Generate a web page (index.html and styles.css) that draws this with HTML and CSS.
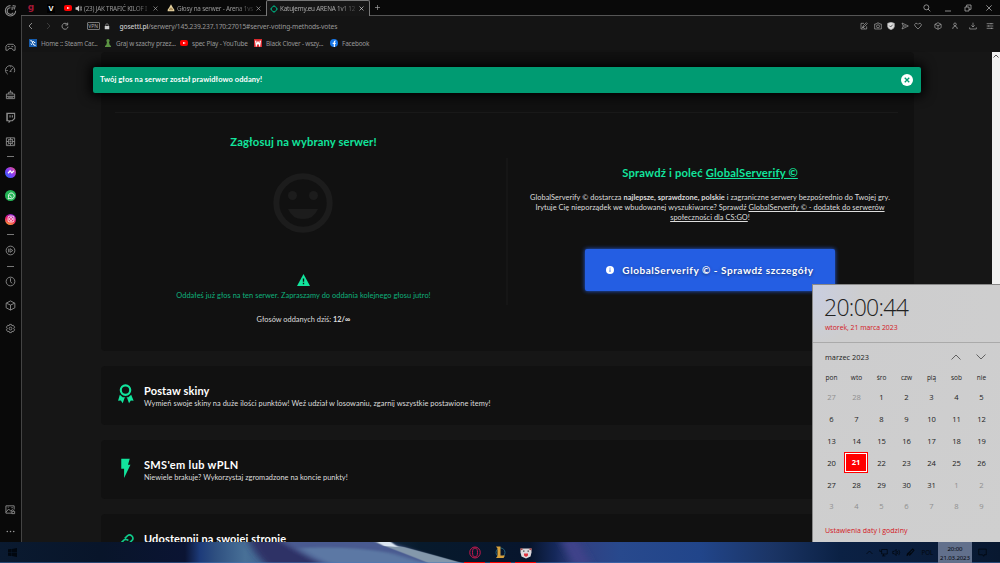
FILE: index.html
```
<!DOCTYPE html>
<html lang="pl">
<head>
    <meta charset="UTF-8">
    <meta name="viewport" content="width=device-width, initial-scale=1.0">
    <title>Katujemy.eu ARENA 1v1</title>
    <link rel="stylesheet" href="styles.css">
</head>
<body>
    <div class="screen">
        <div class="browser">
            <aside class="sidebar">
                <div class="side-logo">
                    <svg viewBox="0 0 24 24"><path d="M12 3a9.5 9.5 0 1 0 9.500 9.500M12 7a6 6 0 1 0 5 9M16 3l6 1M17 7h4M15 11V5M19 10V7"/></svg>
                </div>
                <div class="side-item"><svg viewBox="0 0 24 24"><path d="M6 5h12l4 4v9h-4l-3-4H9l-3 4H2V9zM6 10h4M14 10h4"/></svg></div>
                <div class="side-item"><svg viewBox="0 0 24 24"><path d="M6 20a10 10 0 1 1 14-4M12 13l5-6M10 14h4M3 12h3M12 3v2"/></svg></div>
                <div class="side-item"><svg viewBox="0 0 24 24"><path d="M3 11h18v10H3zM3 16h18M8 11V7h8v4M12 7V3M6 18h12"/></svg></div>
                <div class="side-item"><svg viewBox="0 0 24 24"><path d="M4 3h17v11l-5 5h-4l-3 3v-3H4zM11 7v5M16 7v5M5 3v15" stroke-width="2.400"/></svg></div>
                <div class="side-item"><svg viewBox="0 0 24 24"><path d="M3 4h18v17H3zM8 8h8v8H8zM11 11h2v2h-2zM3 12h5M16 12h5M12 4v4M12 16v5M6 6l2 2M18 6l-2 2M6 19l2-3M18 19l-2-3"/></svg></div>
                <div class="side-dash"></div>
                <div class="side-item"><span class="app-icon messenger"><svg viewBox="0 0 24 24"><path d="M5 15l5-6 4 5 5-5" stroke-width="3"/></svg></span></div>
                <div class="side-item"><span class="app-icon whatsapp"><svg viewBox="0 0 24 24"><path d="M5 19l1.500-4a7 7 0 1 1 3 3zM9 9c0 3 3 6 6 6"/></svg></span></div>
                <div class="side-item"><span class="app-icon instagram"><svg viewBox="0 0 24 24"><rect x="5" y="5" width="14" height="14" rx="4"/><circle cx="12" cy="12" r="3.500"/></svg></span></div>
                <div class="side-dash"></div>
                <div class="side-item"><svg viewBox="0 0 24 24"><circle cx="12" cy="12" r="9.500"/><path d="M8 8v8M11 8l6 4-6 4z"/></svg></div>
                <div class="side-dash"></div>
                <div class="side-item"><svg viewBox="0 0 24 24"><circle cx="12" cy="12" r="9.500"/><path d="M12 5v7l3 4"/></svg></div>
                <div class="side-item"><svg viewBox="0 0 24 24"><path d="M12 2l9.500 5v10L12 22l-9.500-5V7zM3 7l9 4 9-4M12 11v11"/></svg></div>
                <div class="side-item"><svg viewBox="0 0 24 24"><path d="M10 3h4l1 3 3-1 3 4-2 3 2 3-3 4-3-1-1 3h-4l-1-3-3 1-3-4 2-3-2-3 3-4 3 1z"/><circle cx="12" cy="12" r="3"/></svg></div>
                <div class="side-bottom">
                    <div class="side-item"><svg viewBox="0 0 24 24"><path d="M20 12V4H2v16h14M2 18l6-7 5 5 3-4 3 3M6 7h2M15 16h6v5h-6zM14 8h3"/></svg></div>
                    <div class="side-item"><svg viewBox="0 0 24 24" class="solid"><circle cx="5" cy="12" r="1.700"/><circle cx="12" cy="12" r="1.700"/><circle cx="19" cy="12" r="1.700"/></svg></div>
                </div>
            </aside>

            <div class="window">
                <div class="tabs">
                    <div class="tab pinned"><span class="g-icon">g</span></div>
                    <div class="tab pinned"><span class="v-icon">V</span></div>
                    <div class="tab tab-yt">
                        <span class="yt"></span>
                        <svg class="speaker" viewBox="0 0 24 24"><path d="M2 8h5l7-6v20l-7-6H2z"/><path d="M17 6q5 6 0 12M20 3q7 9 0 18" class="line"/></svg>
                        <span class="tab-title">(23) JAK TRAFIĆ KILOF I</span>
                        <svg class="close" viewBox="0 0 10 10"><path d="M1 1l8 8M9 1l-8 8"/></svg>
                    </div>
                    <div class="tab tab-arena">
                        <svg class="tab-icon" viewBox="0 0 24 24"><path d="M12 1l5 9 5 7v5H2v-5l5-7z" fill="#e6d3a0"/><path d="M8 13h8M6 17h12" stroke="#7c5a2c" stroke-width="2"/></svg>
                        <span class="tab-title">Głosy na serwer - Arena 1vs</span>
                        <svg class="close" viewBox="0 0 10 10"><path d="M1 1l8 8M9 1l-8 8"/></svg>
                    </div>
                    <div class="tab active">
                        <svg class="tab-icon" viewBox="0 0 24 24"><circle cx="12" cy="12" r="8" fill="none" stroke="#009b72" stroke-width="3"/><path d="M12 0v6M12 18v6M0 12h6M18 12h6" stroke="#009b72" stroke-width="3"/></svg>
                        <span class="tab-title">Katujemy.eu ARENA 1v1 12</span>
                        <svg class="close" viewBox="0 0 10 10"><path d="M1 1l8 8M9 1l-8 8"/></svg>
                    </div>
                    <div class="new-tab"><svg class="close" viewBox="0 0 10 10"><path d="M5 0v10M0 5h10"/></svg></div>
                    <div class="window-buttons">
                        <svg viewBox="0 0 24 24"><circle cx="10" cy="10" r="7.500"/><path d="M15 15l7 7"/></svg>
                        <svg viewBox="0 0 24 24"><path d="M3 21h18"/></svg>
                        <svg viewBox="0 0 24 24"><path d="M3 9h12v12H3zM8 9V3h13v13h-6"/></svg>
                        <svg viewBox="0 0 24 24"><path d="M4 4l16 16M20 4L4 20"/></svg>
                    </div>
                </div>

                <div class="address-bar">
                    <svg class="nav-icon" viewBox="0 0 24 24"><path d="M15 3l-9 9 9 9"/></svg>
                    <svg class="nav-icon off" viewBox="0 0 24 24"><path d="M9 3l9 9-9 9"/></svg>
                    <svg class="nav-icon" viewBox="0 0 24 24"><path d="M19 7a9 9 0 1 0 2 7M20 2v7h-7"/></svg>
                    <span class="vpn">VPN</span>
                    <svg class="lock" viewBox="0 0 24 24"><path d="M3 10h18v13H3z"/><path class="line" d="M7 10V6a5 5 0 0 1 10 0v4"/></svg>
                    <span class="url"><b>gosetti.pl</b>/serwery/145.239.237.170:27015#server-voting-methods-votes</span>
                    <div class="tools">
                        <svg viewBox="0 0 24 24"><path d="M12 4H3v17h17v-8M8 16l2-5 9-9 3 3-9 9zM5 19l5-5M14 20l-5-5"/></svg>
                        <svg viewBox="0 0 24 24"><path d="M2 6h5l2-3h6l2 3h5v15H2z"/><circle cx="12" cy="13" r="4.500"/></svg>
                        <svg viewBox="0 0 24 24"><path d="M12 1l10 3v9q0 7-10 10Q2 20 2 13V4z" fill="#ddd"/><path d="M7 11l4 4 6-7" stroke="#222"/></svg>
                        <svg viewBox="0 0 24 24"><path d="M3 3l19 9-19 9 4-9zM7 12h8"/></svg>
                        <svg viewBox="0 0 24 24"><path d="M12 21L3 12Q0 6 5 4q5-1 7 3 2-4 7-3 5 2 2 8z"/></svg>
                        <svg viewBox="0 0 24 24" class="gap"><path d="M12 2l9.500 5v10L12 22l-9.500-5V7zM3 7l9 4 9-4M12 11v11"/></svg>
                        <svg viewBox="0 0 24 24" class="gap"><circle cx="12" cy="7" r="4"/><path d="M5 21q0-8 7-8t7 8"/></svg>
                        <svg viewBox="0 0 24 24" class="gap"><path d="M12 2v13M7 10l5 5 5-5M2 16v5h20v-5"/></svg>
                        <svg viewBox="0 0 24 24" class="gap"><path d="M2 5h20M2 12h20M2 19h20M15 3v4M8 10v4M16 17v4"/></svg>
                    </div>
                </div>

                <div class="bookmarks">
                    <div class="bookmark bm-home"><svg viewBox="0 0 24 24"><path d="M0 0h24v24H0z" fill="#165bab"/><path d="M4 5l5 1 2 6 3 6 6 1M12 6l3 4 4 1M5 14l4 3" stroke="#fff" stroke-width="3" fill="none"/></svg><span>Home :: Steam Car...</span></div>
                    <div class="bookmark bm-chess"><svg viewBox="0 0 24 24"><path d="M12 0a5 5 0 0 1 3 9l2 8 4 4v3H3v-3l4-4 2-8a5 5 0 0 1 3-9z" fill="#5b9343"/></svg><span>Graj w szachy przez...</span></div>
                    <div class="bookmark bm-yt"><span class="yt"></span><span>spec Play - YouTube</span></div>
                    <div class="bookmark bm-clover"><svg viewBox="0 0 24 24"><path d="M0 0h24v24H0z" fill="#d9282d"/><path d="M5 5l2 14 5-10 5 10 2-14" stroke="#fff" stroke-width="4" fill="none"/></svg><span>Black Clover - wszy...</span></div>
                    <div class="bookmark bm-fb"><svg viewBox="0 0 24 24"><circle cx="12" cy="12" r="12" fill="#1877e8"/><path d="M17 6h-2q-2 0-2 3v15M8 13h9" stroke="#fff" stroke-width="3.500" fill="none"/></svg><span>Facebook</span></div>
                </div>

                <div class="viewport">
                    <main class="page">
                        <section class="card vote-card">
                            <hr>
                            <div class="columns">
                                <div class="vote">
                                    <h2 class="vote-title">Zagłosuj na wybrany serwer!</h2>
                                    <svg class="smile" viewBox="0 0 60 60"><circle cx="30" cy="30" r="26.700" fill="none" stroke="#1c1c1c" stroke-width="6"/><circle cx="19.500" cy="22.500" r="4.500"/><circle cx="40.500" cy="22.500" r="4.500"/><path d="M15 36h30q-4 10-15 10T15 36z"/></svg>
                                    <svg class="warning" viewBox="0 0 24 22"><path d="M12 0l12 22H0z" fill="#12e59d"/><path d="M12 8v6M12 16v3" stroke="#111" stroke-width="2.500"/></svg>
                                    <p class="vote-info">Oddałeś już głos na ten serwer. Zapraszamy do oddania kolejnego głosu jutro!</p>
                                    <p class="vote-count">Głosów oddanych dziś: <b>12/∞</b></p>
                                </div>
                                <div class="divider"></div>
                                <div class="promo">
                                    <h2 class="promo-title">Sprawdź i poleć <u>GlobalServerify ©</u></h2>
                                    <p class="promo-text">
                                        GlobalServerify © dostarcza <b>najlepsze, sprawdzone, polskie</b> i zagraniczne serwery bezpośrednio do Twojej gry.<br>
                                        Irytuje Cię nieporządek we wbudowanej wyszukiwarce? Sprawdź <u>GlobalServerify © - dodatek do serwerów</u><br>
                                        <u>społeczności dla CS:GO</u>!
                                    </p>
                                    <div class="promo-btn">
                                        <svg viewBox="0 0 24 24"><circle cx="12" cy="12" r="12" fill="#fff"/><path d="M12 5v3M12 10v8" stroke="#245ee3" stroke-width="2.500"/></svg>
                                        <span>GlobalServerify © - Sprawdź szczegóły</span>
                                    </div>
                                </div>
                            </div>
                        </section>

                        <section class="card method">
                            <svg viewBox="0 0 24 28"><circle cx="12" cy="8.500" r="6.700" fill="none" stroke="#12e59d" stroke-width="3"/><path d="M4 15l4 3.500h8l4-3.500 3.500 8.500-4-.5-2.500 4-3-8-1.500-.5-1.500.5-3 8-2.500-4-4 .5z" fill="#12e59d"/></svg>
                            <div>
                                <h3>Postaw skiny</h3>
                                <p class="skins-info">Wymień swoje skiny na duże ilości punktów! Weź udział w losowaniu, zgarnij wszystkie postawione itemy!</p>
                            </div>
                        </section>
                        <section class="card method">
                            <svg viewBox="0 0 24 28"><path d="M6 1h12l-2.500 8.500H19L10 28V15H6z" fill="#12e59d"/></svg>
                            <div>
                                <h3 class="sms-title">SMS'em lub wPLN</h3>
                                <p>Niewiele brakuje? Wykorzystaj zgromadzone na koncie punkty!</p>
                            </div>
                        </section>
                        <section class="card method">
                            <svg viewBox="0 0 24 28"><path d="M11 9l4-4a4.800 4.800 0 0 1 7 6l-5 5a4.500 4.500 0 0 1-6 0M16 12a4.500 4.500 0 0 0-7 0l-5 5" fill="none" stroke="#0fca8b" stroke-width="2.400"/></svg>
                            <div>
                                <h3>Udostępnij na swojej stronie</h3>
                            </div>
                        </section>
                    </main>
                    <div class="scrollbar"><svg viewBox="0 0 8 8"><path d="M1.500 5.500L4 3l2.500 2.500"/></svg></div>
                </div>
            </div>
        </div>

        <footer class="taskbar">
            <svg class="wallpaper" viewBox="0 0 1000 21" preserveAspectRatio="none">
                <defs>
                    <linearGradient id="sky">
                        <stop offset="0" stop-color="#0a1a30"/>
                        <stop offset=".1" stop-color="#08152a"/>
                        <stop offset=".185" stop-color="#0b1433"/>
                        <stop offset=".2" stop-color="#1d3b7a"/>
                        <stop offset=".215" stop-color="#2e4f80"/>
                        <stop offset=".245" stop-color="#487097"/>
                        <stop offset=".27" stop-color="#3f6291"/>
                        <stop offset=".31" stop-color="#303463"/>
                        <stop offset=".36" stop-color="#17304c"/>
                        <stop offset=".42" stop-color="#071a2c"/>
                        <stop offset=".53" stop-color="#07152d"/>
                        <stop offset=".555" stop-color="#15285a"/>
                        <stop offset=".575" stop-color="#323f80"/>
                        <stop offset=".62" stop-color="#28498d"/>
                        <stop offset=".7" stop-color="#21458a"/>
                        <stop offset=".77" stop-color="#1b3566"/>
                        <stop offset=".84" stop-color="#0b2144"/>
                        <stop offset=".9" stop-color="#0a1e3e"/>
                        <stop offset="1" stop-color="#081830"/>
                    </linearGradient>
                    <filter id="soft"><feGaussianBlur stdDeviation="4 1"/></filter>
                    <filter id="edge"><feGaussianBlur stdDeviation="1 .6"/></filter>
                </defs>
                <path d="M0 0h1000v21H0z" fill="url(#sky)"/>
                <g filter="url(#soft)">
                    <path d="M248 -3h55q25 12 42 27h-77q-14-12-20-27z" fill="#2f3366"/>
                    <path d="M278 -3h98q45 13 82 27H325q-25-12-47-27z" fill="#4a5a90"/>
                    <path d="M300 6q50-2 90 5l45 13h-98q-25-8-37-18z" fill="#5c78a4"/>
                    <path d="M562 0h16l12 21h-16z" fill="#41428a"/>
                </g>
                <g filter="url(#edge)">
                    <path d="M374 0l30 5q30 8 62 17h-35q-30-12-57-22z" fill="#8498ab"/>
                    <path d="M377 0h14l7 5-14-1z" fill="#dbe6f2"/>
                </g>
                <path d="M0 20.500h1000" stroke="#4778ba" stroke-opacity=".5"/>
            </svg>
            <svg class="start" viewBox="0 0 20 20"><path d="M0 3l8-1v7H0zM9 2l11-2v9H9zM0 10h8v8l-8-1zM9 10h11v10L9 18z"/></svg>
            <div class="apps">
                <div class="app"><svg viewBox="0 0 24 24"><ellipse cx="12" cy="12" rx="10.500" ry="11" fill="none" stroke="#c7184e" stroke-width="2"/><ellipse cx="12" cy="12" rx="5" ry="9" fill="none" stroke="#c7184e" stroke-width="2"/></svg></div>
                <div class="app"><svg viewBox="0 0 24 24"><circle cx="13" cy="12" r="9" fill="none" stroke="#25627a" stroke-width="2"/><path d="M4 0h9v18h9l-3 5H4l3-4V4z" fill="#d6a03c"/></svg></div>
                <div class="app"><svg viewBox="0 0 24 24"><path d="M1 4l6 0h10l6 0 0 8-2 8-9 4-9-4L1 12z" fill="#ded9dd"/><path d="M1 3l6 2-6 3zM23 3l-6 2 6 3z" fill="#a34444"/><path d="M6 9h3M15 9h3" stroke="#555" stroke-width="2.500"/><path d="M8 14h8v4l-4 3-4-3z" fill="#df3440"/></svg></div>
            </div>
            <div class="tray">
                <svg viewBox="0 0 24 24"><path d="M4 16l8-8 8 8"/></svg>
                <svg viewBox="0 0 24 24"><path d="M7 4h15v12H7zM2 4v5h5M12 16v5M8 21h9"/></svg>
                <svg viewBox="0 0 24 24"><path d="M2 9h4l5-5v16l-5-5H2zM14 8q3 4 0 8M18 5q5 7 0 14"/></svg>
                <svg viewBox="0 0 24 24"><path d="M3 21q0-8 6-8t1 6q-4 0-2-7L18 3l3 3-9 11" stroke-width="3"/></svg>
                <span class="lang">POL</span>
                <div class="clock"><span>20:00</span><span>21.03.2023</span></div>
                <svg class="notice" viewBox="0 0 24 24"><path d="M2 3h20v15h-6v4l-5-4H2z"/></svg>
            </div>
        </footer>

        <div class="toast">
            <span>Twój głos na serwer został prawidłowo oddany!</span>
            <svg viewBox="0 0 24 24"><circle cx="12" cy="12" r="12" fill="#fff"/><path d="M7.500 7.500l9 9M16.500 7.500l-9 9" stroke="#009b72" stroke-width="2.600"/></svg>
        </div>

        <div class="calendar">
            <div class="cal-top">
                <div class="time">20:00:44</div>
                <div class="date">wtorek, 21 marca 2023</div>
            </div>
            <div class="cal-month">
                <span>marzec 2023</span>
                <svg viewBox="0 0 10 10"><path d="M.5 7.500L5 3l4.500 4.500"/></svg>
                <svg viewBox="0 0 10 10"><path d="M.5 2.500L5 7l4.500-4.500"/></svg>
            </div>
            <div class="cal-week">
                <span>pon</span><span>wto</span><span>śro</span><span>czw</span><span>pią</span><span>sob</span><span>nie</span>
            </div>
            <div class="cal-days">
                <span class="other">27</span><span class="other">28</span><span>1</span><span>2</span><span>3</span><span>4</span><span>5</span>
                <span>6</span><span>7</span><span>8</span><span>9</span><span>10</span><span>11</span><span>12</span>
                <span>13</span><span>14</span><span>15</span><span>16</span><span>17</span><span>18</span><span>19</span>
                <span>20</span><span class="today">21</span><span>22</span><span>23</span><span>24</span><span>25</span><span>26</span>
                <span>27</span><span>28</span><span>29</span><span>30</span><span>31</span><span class="other">1</span><span class="other">2</span>
                <span class="other">3</span><span class="other">4</span><span class="other">5</span><span class="other">6</span><span class="other">7</span><span class="other">8</span><span class="other">9</span>
            </div>
            <div class="cal-settings">Ustawienia daty i godziny</div>
        </div>
    </div>
</body>
</html>
```

FILE: styles.css
```
:root {
    --green: #12e59d;
    --page-bg: #161616;
    --card-bg: #111111;
    --ui-font: "Noto Sans", "Open Sans", sans-serif;
    --page-font: Lato, "Open Sans", sans-serif;
}

* {
    margin: 0;
    padding: 0;
    box-sizing: border-box;
}

body {
    width: 1000px;
    height: 563px;
    overflow: hidden;
    background: #000;
    font-family: var(--ui-font);
}

svg {
    display: block;
    flex: none;
}

.screen {
    position: relative;
    display: flex;
    flex-direction: column;
    height: 563px;
}

.browser {
    display: flex;
    height: 542px;
}

/* Sidebar */
.sidebar {
    display: flex;
    flex-direction: column;
    align-items: center;
    width: 21px;
    background: #090909;
    flex: none;
}

.sidebar svg {
    width: 11px;
    height: 11px;
    fill: none;
    stroke: #8b8b8b;
    stroke-width: 2;
}

.sidebar svg.solid {
    fill: #999;
    stroke: none;
}

.side-logo {
    height: 35.3px;
    padding-top: 4px;
}

.side-logo svg {
    width: 13px;
    height: 13px;
}

.side-item {
    display: flex;
    align-items: center;
    justify-content: center;
    height: 23.5px;
    flex: none;
}

.side-dash {
    display: flex;
    align-items: center;
    height: 7.8px;
    flex: none;
}

.side-dash::after {
    content: '';
    width: 7px;
    height: 1px;
    background: #777;
}

.app-icon {
    display: flex;
    align-items: center;
    justify-content: center;
    width: 11px;
    height: 11px;
    border-radius: 50%;
}

.sidebar .app-icon svg {
    width: 10px;
    height: 10px;
    stroke: #fff;
}

.messenger {
    background: linear-gradient(45deg, #1a6dff, #8a3cf5 50%, #f9557a);
}

.whatsapp {
    background: #22b455;
}

.instagram {
    background: linear-gradient(20deg, #ffb52e, #ee1c68 50%, #6f1cf0);
}

.side-bottom {
    margin-top: auto;
}

.side-bottom .side-item {
    height: 21.5px;
}

/* Browser window */
.window {
    display: flex;
    flex-direction: column;
    flex: 1;
    min-width: 0;
}

.tabs {
    display: flex;
    height: 16px;
    background: #090909;
    border-bottom: 1px solid #555;
    color: #999;
    font-size: 6.3px;
}

.tab {
    display: flex;
    align-items: center;
    height: 16px;
}

.pinned {
    justify-content: center;
    width: 20px;
}

.g-icon {
    color: #a31836;
    font: bold 9px/10px "DejaVu Sans", sans-serif;
    transform: translateY(-1px);
}

.v-icon {
    width: 8px;
    background: #000;
    color: #fff;
    font: bold 7.5px/9px "Liberation Sans", sans-serif;
    text-align: center;
}

.tab-yt {
    width: 102px;
    padding-left: 3px;
    letter-spacing: -.2px;
}

.tab-arena {
    width: 103px;
    padding-left: 4px;
    letter-spacing: -.2px;
}

.tab.active {
    width: 104px;
    padding-left: 3px;
    background: #161616;
    border: 1px solid #777;
    border-bottom: 0;
    border-radius: 2px 2px 0 0;
    color: #aaa;
    letter-spacing: -.18px;
}

.tab-title {
    flex: 1;
    white-space: nowrap;
    -webkit-mask-image: linear-gradient(90deg, #000 75%, rgba(0, 0, 0, .2));
    mask-image: linear-gradient(90deg, #000 75%, rgba(0, 0, 0, .2));
}

.tab-icon {
    width: 8px;
    height: 8px;
    margin-right: 2px;
}

.close {
    width: 5px;
    height: 5px;
    margin-left: 2px;
    margin-right: 5px;
    stroke: #aaa;
    stroke-width: 1.3;
}

.active .close {
    stroke: #ddd;
}

.yt {
    position: relative;
    display: block;
    width: 8px;
    height: 6px;
    background: #f00;
    border-radius: 2px;
    flex: none;
}

.yt::after {
    content: '';
    position: absolute;
    left: 3px;
    top: 1.5px;
    border-left: 3px solid #fff;
    border-top: 1.5px solid transparent;
    border-bottom: 1.5px solid transparent;
}

.speaker {
    width: 7px;
    height: 7px;
    margin: 0 2px 0 3px;
    fill: #ccc;
}

.line {
    fill: none;
    stroke: #ccc;
    stroke-width: 2;
}

.new-tab {
    padding: 5px 0 0 3px;
}

.window-buttons {
    display: flex;
    align-items: center;
    gap: 12.7px;
    margin-left: auto;
    padding-right: 7px;
}

.window-buttons svg {
    width: 8px;
    height: 8px;
    fill: none;
    stroke: #aaa;
    stroke-width: 2.4;
}

.address-bar {
    display: flex;
    align-items: center;
    height: 20px;
    padding-left: 5px;
    background: #141414;
    border-left: 1px solid #444;
}

.nav-icon {
    width: 8px;
    height: 8px;
    margin-right: 9.2px;
    fill: none;
    stroke: #aaa;
    stroke-width: 2.4;
}

.nav-icon.off {
    stroke: #444;
}

.vpn {
    width: 13px;
    height: 8px;
    margin-left: 8px;
    border: 1px solid #777;
    border-radius: 1px;
    color: #aaa;
    font-size: 5px;
    line-height: 6px;
    text-align: center;
}

.lock {
    width: 6px;
    height: 7px;
    margin: 0 10px 0 4px;
    fill: #ccc;
}

.url {
    color: #999;
    font-size: 6.7px;
    letter-spacing: -.14px;
    white-space: nowrap;
}

.url b {
    color: #ccc;
    font-weight: 500;
}

.tools {
    display: flex;
    gap: 5.5px;
    margin-left: auto;
    padding-right: 6px;
}

.tools svg {
    width: 8px;
    height: 8px;
    fill: none;
    stroke: #aaa;
    stroke-width: 2;
}

.tools .gap {
    margin-left: 4px;
}

.tools .gap:nth-child(6) {
    margin-left: 6px;
}

.bookmarks {
    display: flex;
    align-items: center;
    height: 16px;
    padding: 0 0 2px 7px;
    background: #141414;
    border-left: 1px solid #444;
    color: #999;
    font-size: 6.4px;
    letter-spacing: -.17px;
}

.bookmark {
    display: flex;
    align-items: center;
    gap: 4px;
    white-space: nowrap;
}

.bookmark svg {
    width: 8px;
    height: 8px;
}

.bm-home {
    width: 75px;
}

.bm-chess {
    width: 76px;
}

.bm-yt {
    width: 74px;
}

.bm-clover {
    width: 76px;
}

.viewport {
    display: flex;
    height: 490px;
    background: var(--page-bg);
    border-left: 1px solid #444;
}

/* Voting page */
.page {
    display: flex;
    flex-direction: column;
    gap: 15px;
    flex: 1;
    height: 490px;
    padding: 0 78px 0 79px;
    overflow: hidden;
    color: #ddd;
    font-family: var(--page-font);
}

.card {
    background: var(--card-bg);
    border-radius: 4px;
    flex: none;
}

.vote-card {
    height: 299px;
    padding: 60px 16px 0 14px;
}

.vote-card hr {
    border: 0;
    border-top: 1px solid #191919;
}

.columns {
    display: flex;
}

.vote {
    display: flex;
    flex-direction: column;
    align-items: center;
    width: 377px;
    padding-top: 21px;
}

.vote h2,
.promo h2 {
    color: var(--green);
    font-size: 11.2px;
    font-weight: 700;
    letter-spacing: .2px;
    line-height: 16px;
    white-space: nowrap;
}

.vote .vote-title {
    letter-spacing: .15px;
}

.smile {
    width: 60px;
    height: 60px;
    margin: 23px 1px 0 0;
    fill: #1c1c1c;
}

.warning {
    width: 13px;
    height: 12px;
    margin-top: 41px;
}

.vote-info {
    margin-top: 4px;
    color: #0fb27c;
    font-size: 7.4px;
    letter-spacing: .04px;
    line-height: 11px;
    white-space: nowrap;
}

.vote-count {
    margin-top: 14px;
    font-size: 7.4px;
    line-height: 10px;
}

.divider {
    width: 2px;
    height: 147px;
    margin: 45px 0 0 14px;
    background: #161616;
}

.promo {
    display: flex;
    flex-direction: column;
    align-items: center;
    flex: 1;
    padding: 52px 0 0 14px;
}

.promo-text {
    margin-top: 12px;
    font-size: 7.4px;
    letter-spacing: .035px;
    line-height: 10px;
    text-align: center;
    white-space: nowrap;
}

.promo-btn {
    display: flex;
    align-items: center;
    justify-content: center;
    gap: 8px;
    width: 250px;
    height: 42px;
    margin-top: 26px;
    border-radius: 2px;
    background: #245ee3;
    box-shadow: 0 0 4px #245ee3;
    color: #fff;
    font-size: 10px;
    font-weight: 700;
    letter-spacing: .54px;
    white-space: nowrap;
    text-shadow: 0 1px 3px rgba(0, 0, 0, .5);
}

.promo-btn svg {
    width: 8px;
    height: 8px;
}

.method {
    display: flex;
    align-items: flex-start;
    gap: 10px;
    height: 59px;
    padding: 18px 16px;
}

.method svg {
    width: 17px;
    height: 20px;
}

.method h3 {
    color: #fff;
    font-size: 11px;
    font-weight: 700;
    letter-spacing: .13px;
    line-height: 14px;
    white-space: nowrap;
}

.method .sms-title {
    letter-spacing: .33px;
}

.method p {
    margin-top: .5px;
    font-size: 7.4px;
    line-height: 10px;
    white-space: nowrap;
}

.method .skins-info {
    letter-spacing: .04px;
}

.scrollbar {
    width: 8px;
    background: #f1f1f1;
}

.scrollbar svg {
    width: 8px;
    height: 8px;
    fill: none;
    stroke: #555;
}

/* Taskbar */
.taskbar {
    position: relative;
    display: flex;
    align-items: center;
    height: 21px;
}

.wallpaper {
    position: absolute;
    inset: 0;
    width: 1000px;
    height: 21px;
    z-index: -1;
}

.start {
    width: 9px;
    height: 9px;
    margin: 0 auto 0 8px;
    fill: #01070f;
}

.apps {
    display: flex;
    gap: 4.5px;
    height: 21px;
    margin-right: 329px;
}

.app {
    display: flex;
    justify-content: center;
    width: 21px;
    padding-top: 4px;
    border-bottom: 1px solid #f00;
}

.app svg {
    width: 12px;
    height: 13px;
}

.tray {
    display: flex;
    align-items: center;
    gap: 4.6px;
    color: #02070e;
}

.tray svg {
    width: 9px;
    height: 9px;
    fill: none;
    stroke: #02070e;
    stroke-width: 2;
}

.lang {
    margin-left: 2px;
    font-size: 6.2px;
}

.clock {
    display: flex;
    flex-direction: column;
    align-items: center;
    justify-content: center;
    width: 34px;
    height: 21px;
    background: #62708c;
    font-size: 6.1px;
    letter-spacing: -.15px;
    line-height: 9px;
}

.tray .notice {
    margin: 0 13px 0 1.5px;
}

/* Confirmation toast */
.toast {
    position: absolute;
    left: 93px;
    top: 67px;
    display: flex;
    align-items: center;
    justify-content: space-between;
    width: 828px;
    height: 26px;
    padding: 0 8px 0 7px;
    border-radius: 2px;
    background: #009b72;
    box-shadow: 0 0 12px 3px #000;
    color: #fff;
    font: 700 7.5px/10px var(--page-font);
    letter-spacing: .09px;
}

.toast svg {
    width: 12px;
    height: 12px;
}

/* Calendar flyout */
.calendar {
    position: absolute;
    left: 812px;
    top: 284px;
    width: 188px;
    height: 258px;
    border-top: 1px solid #888;
    border-left: 1px solid #888;
    background: radial-gradient(circle at 0 10px, #c9cee0, #cdcdce 50px, #cfcfcf);
    color: #222;
    font-family: "Open Sans", "Noto Sans", sans-serif;
}

.cal-top {
    height: 58px;
    padding: 8px 0 0 11px;
    border-bottom: 1px solid #aaa;
}

.time {
    font-size: 23px;
    font-weight: 300;
    letter-spacing: -.7px;
    line-height: 28px;
}

.date {
    padding-left: 1px;
    color: #d4161d;
    font-size: 6.9px;
    letter-spacing: -.03px;
    line-height: 14px;
}

.cal-month {
    display: flex;
    align-items: center;
    height: 28px;
    padding: 0 14px 0 12px;
    font-size: 7.4px;
}

.cal-month span {
    flex: 1;
}

.cal-month svg {
    width: 10px;
    height: 10px;
    margin-left: 15px;
    fill: none;
    stroke: #555;
    stroke-width: .9;
}

.cal-week,
.cal-days {
    display: grid;
    grid-template-columns: repeat(7, 25px);
    padding-left: 6px;
    text-align: center;
}

.cal-week {
    font-size: 6.5px;
    line-height: 14px;
}

.cal-days {
    padding-top: 1px;
    grid-auto-rows: 21.9px;
    align-items: center;
    font-size: 7.6px;
    line-height: 22px;
}

.other {
    color: #8e8e8e;
}

.today {
    width: 24px;
    height: 21px;
    border: 1px solid #f00;
    background: #f00;
    box-shadow: inset 0 0 0 1px #fff;
    color: #fff;
    font-weight: 700;
    line-height: 19px;
}

.cal-settings {
    padding: 7px 0 0 12px;
    color: #d4161d;
    font-size: 7px;
    line-height: 14px;
}
```
